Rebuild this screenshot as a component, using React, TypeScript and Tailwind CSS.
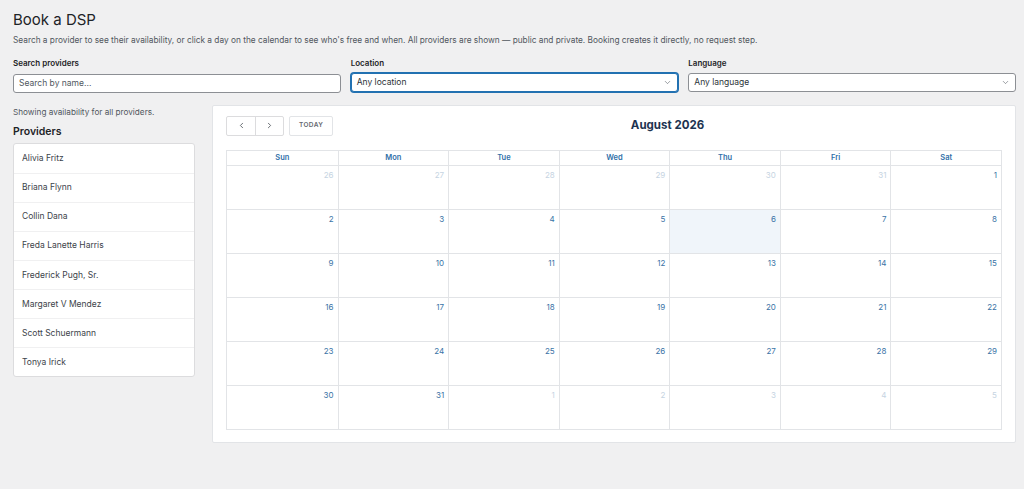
import { ChevronDown, ChevronLeft, ChevronRight } from 'lucide-react';

const providers = [
  'Alivia Fritz',
  'Briana Flynn',
  'Collin Dana',
  'Freda Lanette Harris',
  'Frederick Pugh, Sr.',
  'Margaret V Mendez',
  'Scott Schuermann',
  'Tonya Irick',
];

const weekdays = ['Sun', 'Mon', 'Tue', 'Wed', 'Thu', 'Fri', 'Sat'];

// August 2026 starts on a Saturday; leading days from July, trailing from September.
function buildWeeks() {
  const cells: { day: number; current: boolean }[] = [];
  for (let d = 26; d <= 31; d++) cells.push({ day: d, current: false });
  for (let d = 1; d <= 31; d++) cells.push({ day: d, current: true });
  for (let d = 1; cells.length < 42; d++) cells.push({ day: d, current: false });
  const weeks = [];
  for (let i = 0; i < 42; i += 7) weeks.push(cells.slice(i, i + 7));
  return weeks;
}

export default function App() {
  const weeks = buildWeeks();

  return (
    <div className="min-h-screen bg-[#f0f0f1] pl-[13px] pr-[8px] pt-[11px] font-['Inter',sans-serif] text-[#1d2327]">
      <h1 className="text-[15px] leading-[18px] font-normal text-[#1d2327]">Book a DSP</h1>
      <p className="mt-[5px] text-[8.3px] leading-[12px] text-[#50575e]">
        Search a provider to see their availability, or click a day on the calendar to see who's free and when. All providers are shown — public and private. Booking creates it directly, no request step.
      </p>

      {/* Filters */}
      <div className="mt-[12px] grid grid-cols-3 gap-[10px]">
        <div>
          <label className="block text-[8px] font-semibold leading-[10px] text-[#1d2327]">Search providers</label>
          <input
            type="text"
            placeholder="Search by name..."
            className="mt-[5px] h-[19px] w-full rounded-[3px] border border-[#8c8f94] bg-white px-[5px] text-[8.5px] text-[#2c3338] placeholder:text-[#50575e] outline-none"
          />
        </div>
        <div>
          <label className="block text-[8px] font-semibold leading-[10px] text-[#1d2327]">Location</label>
          <div className="mt-[5px] flex h-[19px] items-center justify-between rounded-[3px] border border-[#2271b1] bg-white px-[5px] shadow-[0_0_0_1px_#2271b1]">
            <span className="text-[8.5px] text-[#2c3338]">Any location</span>
            <ChevronDown size={9} strokeWidth={1.5} className="text-[#50575e]" />
          </div>
        </div>
        <div>
          <label className="block text-[8px] font-semibold leading-[10px] text-[#1d2327]">Language</label>
          <div className="mt-[5px] flex h-[19px] items-center justify-between rounded-[3px] border border-[#8c8f94] bg-white px-[5px]">
            <span className="text-[8.5px] text-[#2c3338]">Any language</span>
            <ChevronDown size={9} strokeWidth={1.5} className="text-[#50575e]" />
          </div>
        </div>
      </div>

      {/* Main */}
      <div className="mt-[12px] flex gap-[17px]">
        <div className="w-[182px] shrink-0">
          <p className="mt-[2px] text-[8.2px] leading-[10px] text-[#50575e]">Showing availability for all providers.</p>
          <h2 className="mt-[8px] text-[10.5px] font-semibold leading-[14px] text-[#1d2327]">Providers</h2>
          <ul className="mt-[4px] rounded-[3px] border border-[#dcdcde] bg-white">
            {providers.map((name, i) => (
              <li
                key={name}
                className={`flex h-[29.1px] items-center px-[8px] text-[8.5px] text-[#3c434a] ${i > 0 ? 'border-t border-[#f0f0f1]' : ''}`}
              >
                {name}
              </li>
            ))}
          </ul>
        </div>

        <div className="flex-1 rounded-[2px] border border-[#e2e4e7] bg-white px-[13px] pb-[12px] pt-[10px]">
          {/* Toolbar */}
          <div className="flex h-[20px] items-center justify-between">
            <div className="flex w-[107px] items-center">
              <div className="flex h-[20px] rounded-[2px] border border-[#dcdcde]">
                <button className="flex w-[28px] items-center justify-center text-[#3c434a]">
                  <ChevronLeft size={9} strokeWidth={2} />
                </button>
                <button className="flex w-[28px] items-center justify-center border-l border-[#dcdcde] text-[#3c434a]">
                  <ChevronRight size={9} strokeWidth={2} />
                </button>
              </div>
              <button className="ml-[5px] h-[20px] rounded-[2px] border border-[#e2e4e7] px-[9px] text-[6.5px] font-semibold tracking-[0.06em] text-[#646970]">
                TODAY
              </button>
            </div>
            <h3 className="text-[11.5px] font-bold text-[#1d3350]">August 2026</h3>
            <div className="w-0" />
          </div>

          {/* Grid */}
          <div className="mt-[14px] border border-[#e2e4e7]">
            <div className="grid grid-cols-7">
              {weekdays.map((w, i) => (
                <div
                  key={w}
                  className={`flex h-[14px] items-center justify-center text-[7.5px] font-semibold text-[#2f6fa8] ${i > 0 ? 'border-l border-[#e2e4e7]' : ''}`}
                >
                  {w}
                </div>
              ))}
            </div>
            {weeks.map((week, wi) => (
              <div key={wi} className="grid grid-cols-7 border-t border-[#e2e4e7]">
                {week.map((c, i) => {
                  const isToday = c.current && c.day === 6;
                  return (
                    <div
                      key={i}
                      className={`h-[43px] pr-[4px] pt-[4px] text-right text-[8px] leading-[10px] ${i > 0 ? 'border-l border-[#e2e4e7]' : ''} ${isToday ? 'bg-[#f0f5fa]' : ''} ${c.current ? 'text-[#3a73a6]' : 'text-[#c6d4e2]'}`}
                    >
                      {c.day}
                    </div>
                  );
                })}
              </div>
            ))}
          </div>
        </div>
      </div>
    </div>
  );
}
